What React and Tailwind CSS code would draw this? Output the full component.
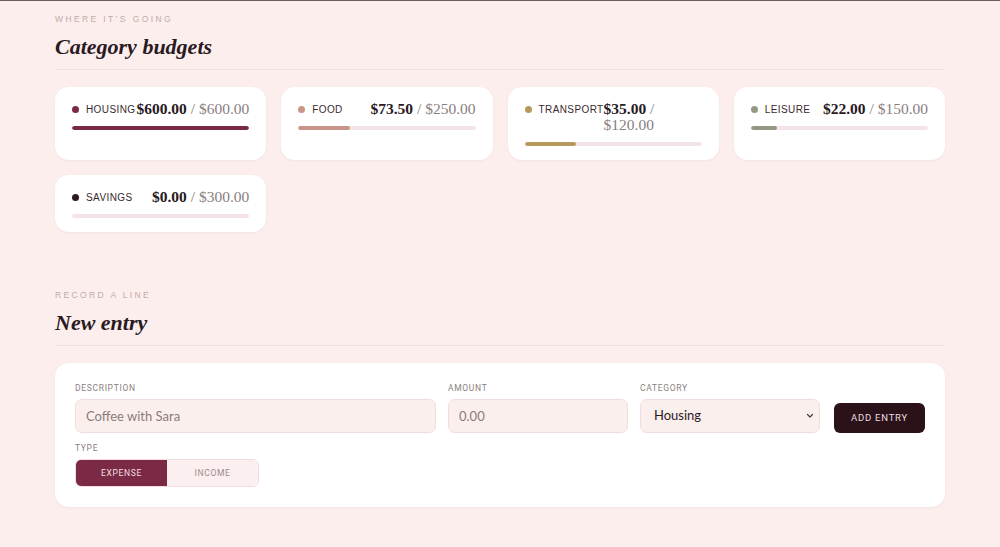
import React from "react";

const serif = { fontFamily: '"Liberation Serif", "DejaVu Serif", serif' };

const cats = [
  { name: "Housing", spent: 600, budget: 600, color: "bg-[#7b2a45]" },
  { name: "Food", spent: 73.5, budget: 250, color: "bg-[#c9958b]" },
  { name: "Transport", spent: 35, budget: 120, color: "bg-[#b8995c]" },
  { name: "Leisure", spent: 22, budget: 150, color: "bg-[#949a82]" },
  { name: "Savings", spent: 0, budget: 300, color: "bg-[#2e1a20]" },
];

const fmt = (n) => "$" + n.toFixed(2);

function Eyebrow({ children }) {
  return (
    <div className="font-['Liberation_Sans',sans-serif] text-[8.5px] leading-[12px] tracking-[0.28em] uppercase text-[#c4aba8]">
      {children}
    </div>
  );
}

function Heading({ children }) {
  return (
    <div className="mt-[8px] pb-[8px] border-b border-[#f1dfdf]">
      <h2 className="font-['Liberation_Serif',serif] italic font-bold text-[22px] leading-[28px] text-[#2a1a1f]">
        {children}
      </h2>
    </div>
  );
}

function Card({ c }) {
  const pct = Math.min(100, (c.spent / c.budget) * 100);
  return (
    <div className="bg-white rounded-[14px] px-[17px] pt-[14px] pb-[14px] shadow-[0_1px_3px_rgba(120,60,70,0.05)] flex flex-col">
      <div className="flex items-start justify-between">
        <div className="flex items-center gap-[7px] h-[16px] shrink-0">
          <span className={"w-[7px] h-[7px] rounded-full " + c.color} />
          <span className="font-['Liberation_Sans',sans-serif] text-[10px] tracking-[0.04em] uppercase text-[#3a2a2e]">
            {c.name}
          </span>
        </div>
        <div className="text-[15.5px] leading-[16px] text-[#8b7e80] min-w-0" style={serif}>
          <span className="font-bold text-[#2a1a1f]">{fmt(c.spent)}</span> / {fmt(c.budget)}
        </div>
      </div>
      <div className="mt-[9px] h-[4px] rounded-full bg-[#f4e4e6] overflow-hidden">
        <div className={"h-full rounded-full " + c.color} style={{ width: pct + "%" }} />
      </div>
    </div>
  );
}

function Label({ children }) {
  return (
    <div className="font-['Roboto',sans-serif] text-[8.5px] leading-[10px] tracking-[0.08em] uppercase text-[#8a7f80] mb-[6px]">
      {children}
    </div>
  );
}

export default function App() {
  return (
    <div className="min-h-[547px] bg-[#fbeeed] border-t border-[#6b6062]">
      <div className="w-[890px] mx-auto pt-[12px] pb-[40px]">
        <Eyebrow>Where it’s going</Eyebrow>
        <Heading>Category budgets</Heading>
        <div className="mt-[17px] grid grid-cols-4 gap-x-[15px] gap-y-[15px]">
          {cats.map((c) => (
            <Card key={c.name} c={c} />
          ))}
        </div>

        <div className="mt-[57px]">
          <Eyebrow>Record a line</Eyebrow>
        </div>
        <Heading>New entry</Heading>

        <div className="mt-[17px] bg-white rounded-[14px] px-[20px] pt-[20px] pb-[20px] shadow-[0_1px_3px_rgba(120,60,70,0.05)]">
          <div className="grid grid-cols-[361px_180px_180px_1fr] gap-x-[12px] items-end">
            <div>
              <Label>Description</Label>
              <input
                placeholder="Coffee with Sara"
                className="w-full h-[34px] rounded-[7px] bg-[#fbefee] border border-[#efdddd] px-[10px] font-['Lato',sans-serif] text-[13px] text-[#2a1a1f] placeholder:text-[#8a7a7c] outline-none"
              />
            </div>
            <div>
              <Label>Amount</Label>
              <input
                placeholder="0.00"
                className="w-full h-[34px] rounded-[7px] bg-[#fbefee] border border-[#efdddd] px-[10px] font-['Lato',sans-serif] text-[13px] text-[#2a1a1f] placeholder:text-[#8a7a7c] outline-none"
              />
            </div>
            <div>
              <Label>Category</Label>
              <div className="relative h-[34px] rounded-[7px] bg-[#fbefee] border border-[#efdddd] flex items-center px-[13px]">
                <span className="font-['Lato',sans-serif] text-[13px] text-[#2a1a1f]">Housing</span>
                <svg className="absolute right-[5px] top-[13px]" width="8" height="6" viewBox="0 0 8 6" fill="none">
                  <path d="M1.5 1.5 L4 4 L6.5 1.5" stroke="#4a3a3e" strokeWidth="1.2" strokeLinecap="round" strokeLinejoin="round" />
                </svg>
              </div>
            </div>
            <div className="flex justify-end">
              <button className="h-[30px] w-[91px] rounded-[6px] bg-[#2a1218] font-['Roboto',sans-serif] text-[9.5px] tracking-[0.08em] uppercase text-[#eddde0]">
                Add entry
              </button>
            </div>
          </div>

          <div className="mt-[10px]">
            <Label>Type</Label>
            <div className="flex w-[184px] h-[28px] rounded-[6px] overflow-hidden border border-[#f0dede]">
              <div className="flex-1 bg-[#7b2a45] flex items-center justify-center font-['Roboto',sans-serif] text-[8.5px] tracking-[0.08em] uppercase text-[#f2dfe3]">
                Expense
              </div>
              <div className="flex-1 bg-[#fcefef] flex items-center justify-center font-['Roboto',sans-serif] text-[8.5px] tracking-[0.08em] uppercase text-[#9b8a8d]">
                Income
              </div>
            </div>
          </div>
        </div>
      </div>
    </div>
  );
}
